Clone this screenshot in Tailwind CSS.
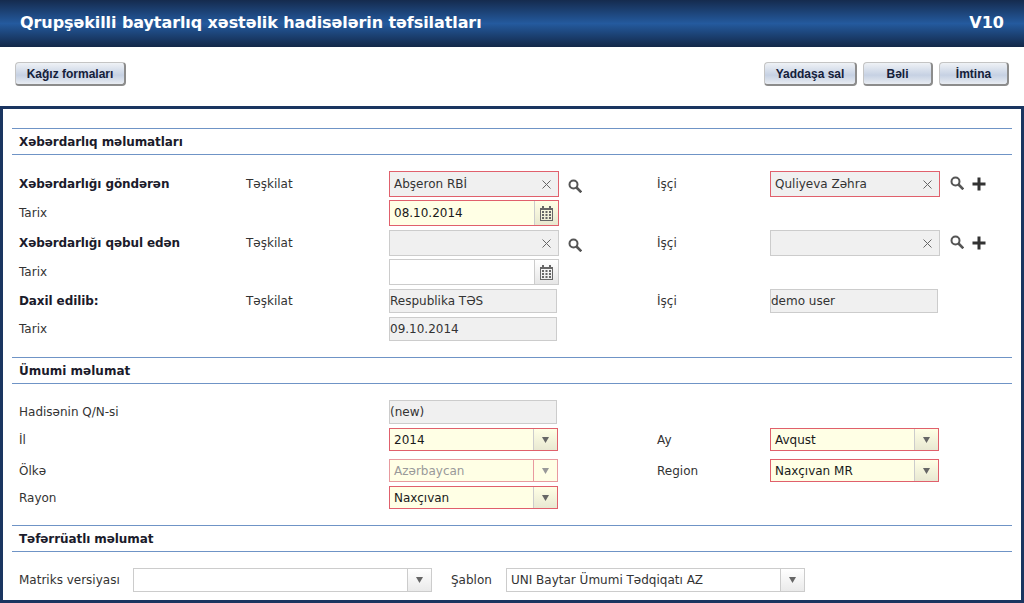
<!DOCTYPE html>
<html lang="en">
<head>
    <meta charset="UTF-8">
    <meta name="viewport" content="width=device-width, initial-scale=1.0">
    <title>Hadisə</title>
    <script src="https://cdn.jsdelivr.net/npm/@tailwindcss/browser@4"></script>
</head>
<body class="bg-white h-[603px] overflow-hidden font-['DejaVu_Sans',sans-serif] text-[12px] text-[#333]">
    <!-- header -->
    <div class="h-[47px] flex items-center justify-between pl-[20px] pr-[20px] pb-[1px] text-white font-bold text-[16px] bg-[linear-gradient(#152b4e,#245a9e_50%,#132848)]">
        <span class="tracking-[-0.08px]">Qrupşəkilli baytarlıq xəstəlik hadisələrin təfsilatları</span>
        <span>V10</span>
    </div>

    <!-- toolbar -->
    <div class="h-[59px] flex items-start justify-between pt-[15px] pl-[15px] pr-[15px]">
        <button class="w-[111px] h-[24px] rounded-[4px] border border-[#c4c4c4] border-r-2 border-b-2 border-r-[#8c8c8c] border-b-[#8c8c8c] bg-[linear-gradient(#eff2f6,#c6d1e3_58%,#e8ecf2)] font-['Liberation_Sans',sans-serif] font-bold text-[12px] text-[#14203a]">Kağız formaları</button>
        <div class="flex gap-[6px]">
            <button class="w-[93px] h-[24px] rounded-[4px] border border-[#c4c4c4] border-r-2 border-b-2 border-r-[#8c8c8c] border-b-[#8c8c8c] bg-[linear-gradient(#eff2f6,#c6d1e3_58%,#e8ecf2)] font-['Liberation_Sans',sans-serif] font-bold text-[12px] text-[#14203a]">Yaddaşa sal</button>
            <button class="w-[70px] h-[24px] rounded-[4px] border border-[#c4c4c4] border-r-2 border-b-2 border-r-[#8c8c8c] border-b-[#8c8c8c] bg-[linear-gradient(#eff2f6,#c6d1e3_58%,#e8ecf2)] font-['Liberation_Sans',sans-serif] font-bold text-[12px] text-[#14203a]">Bəli</button>
            <button class="w-[70px] h-[24px] rounded-[4px] border border-[#c4c4c4] border-r-2 border-b-2 border-r-[#8c8c8c] border-b-[#8c8c8c] bg-[linear-gradient(#eff2f6,#c6d1e3_58%,#e8ecf2)] font-['Liberation_Sans',sans-serif] font-bold text-[12px] text-[#14203a]">İmtina</button>
        </div>
    </div>

    <!-- main panel -->
    <div class="h-[497px] border-[3px] border-[#1a3560] pt-[19px] pl-[9px] pr-[9px]">

        <div class="h-[27px] border-y border-[#6f94c6] pl-[7px] flex items-center font-bold text-[12px] text-[#1b1b2b] tracking-[-0.08px]">Xəbərdarlıq məlumatları</div>

        <div class="pt-[16px] flex flex-col gap-[3px]">
            <div class="flex items-center h-[26px]">
                <div class="w-[234px] pl-[7px] font-bold text-[#1b1b2b] tracking-[-0.1px]">Xəbərdarlığı göndərən</div>
                <div class="w-[143px]">Təşkilat</div>
                <div class="w-[170px] h-[26px] border border-[#e0606c] bg-[#f0f0f0] flex items-center justify-between pl-[4px] pr-[7px]">
                    <span>Abşeron RBİ</span>
                    <svg width="9" height="9" viewBox="0 0 9 9" fill="none" stroke="#666" stroke-width="1"><path d="M0.5 0.5l8 8M8.500 0.5l-8 8"/></svg>
                </div>
                <div class="w-[98px] pl-[9px] pt-[3px]">
                    <svg width="14" height="14" viewBox="0 0 14 14" fill="none" stroke="#555"><circle cx="5.5" cy="5.5" r="4" stroke-width="2"/><path d="M8.500 8.500l4.800 4.800" stroke-width="2.6"/></svg>
                </div>
                <div class="w-[113px]">İşçi</div>
                <div class="w-[170px] h-[26px] border border-[#e0606c] bg-[#f0f0f0] flex items-center justify-between pl-[4px] pr-[7px]">
                    <span>Quliyeva Zəhra</span>
                    <svg width="9" height="9" viewBox="0 0 9 9" fill="none" stroke="#666" stroke-width="1"><path d="M0.5 0.5l8 8M8.500 0.5l-8 8"/></svg>
                </div>
                <div class="pl-[10px] pb-[2px] flex items-center gap-[8px]">
                    <svg width="14" height="14" viewBox="0 0 14 14" fill="none" stroke="#555"><circle cx="5.5" cy="5.5" r="4" stroke-width="2"/><path d="M8.500 8.500l4.800 4.800" stroke-width="2.6"/></svg>
                    <svg class="mt-[2px]" width="14" height="14" viewBox="0 0 14 14" fill="#333"><path d="M5.500 0.500h3v5h5v3h-5v5h-3v-5h-5v-3h5z"/></svg>
                </div>
            </div>
            <div class="flex items-center h-[26px]">
                <div class="w-[377px] pl-[7px]">Tarix</div>
                <div class="w-[170px] h-[26px] border border-[#e0606c] bg-[#ffffe5] flex items-center justify-between pl-[4px]">
                    <span class="text-[#1a1a1a]">08.10.2014</span>
                    <div class="w-[24px] h-full border-l border-[#ccc] bg-[linear-gradient(#ffffe5,#e8e8d0)] flex items-center justify-center">
                        <svg width="13" height="15" viewBox="0 0 13 15" fill="#666"><path d="M2 0h2v2h5v-2h2v2h2v13h-13v-13h2zM1 4v10h11v-10zM2 5h2v2h-2zM5.500 5h2v2h-2zM9 5h2v2h-2zM2 8h2v2h-2zM5.500 8h2v2h-2zM9 8h2v2h-2zM2 11h2v2h-2zM5.500 11h2v2h-2zM9 11h2v2h-2z"/></svg>
                    </div>
                </div>
            </div>
            <div class="flex items-center h-[26px] mt-[1px]">
                <div class="w-[234px] pl-[7px] font-bold text-[#1b1b2b] tracking-[-0.1px]">Xəbərdarlığı qəbul edən</div>
                <div class="w-[143px]">Təşkilat</div>
                <div class="w-[170px] h-[26px] border border-[#ccc] bg-[#f0f0f0] flex items-center justify-end pr-[7px]">
                    <svg width="9" height="9" viewBox="0 0 9 9" fill="none" stroke="#666" stroke-width="1"><path d="M0.5 0.5l8 8M8.500 0.5l-8 8"/></svg>
                </div>
                <div class="w-[98px] pl-[9px] pt-[3px]">
                    <svg width="14" height="14" viewBox="0 0 14 14" fill="none" stroke="#555"><circle cx="5.5" cy="5.5" r="4" stroke-width="2"/><path d="M8.500 8.500l4.800 4.800" stroke-width="2.6"/></svg>
                </div>
                <div class="w-[113px]">İşçi</div>
                <div class="w-[170px] h-[26px] border border-[#ccc] bg-[#f0f0f0] flex items-center justify-end pr-[7px]">
                    <svg width="9" height="9" viewBox="0 0 9 9" fill="none" stroke="#666" stroke-width="1"><path d="M0.5 0.5l8 8M8.500 0.5l-8 8"/></svg>
                </div>
                <div class="pl-[10px] pb-[2px] flex items-center gap-[8px]">
                    <svg width="14" height="14" viewBox="0 0 14 14" fill="none" stroke="#555"><circle cx="5.5" cy="5.5" r="4" stroke-width="2"/><path d="M8.500 8.500l4.800 4.800" stroke-width="2.6"/></svg>
                    <svg class="mt-[2px]" width="14" height="14" viewBox="0 0 14 14" fill="#333"><path d="M5.500 0.500h3v5h5v3h-5v5h-3v-5h-5v-3h5z"/></svg>
                </div>
            </div>
            <div class="flex items-center h-[26px]">
                <div class="w-[377px] pl-[7px]">Tarix</div>
                <div class="w-[170px] h-[26px] border border-[#ccc] bg-white flex justify-end">
                    <div class="w-[24px] h-full border-l border-[#ccc] bg-[linear-gradient(#fff,#e6e6e6)] flex items-center justify-center">
                        <svg width="13" height="15" viewBox="0 0 13 15" fill="#666"><path d="M2 0h2v2h5v-2h2v2h2v13h-13v-13h2zM1 4v10h11v-10zM2 5h2v2h-2zM5.500 5h2v2h-2zM9 5h2v2h-2zM2 8h2v2h-2zM5.500 8h2v2h-2zM9 8h2v2h-2zM2 11h2v2h-2zM5.500 11h2v2h-2zM9 11h2v2h-2z"/></svg>
                    </div>
                </div>
            </div>
            <div class="flex items-center h-[24px] mt-[1px]">
                <div class="w-[234px] pl-[7px] font-bold text-[#1b1b2b] tracking-[-0.1px]">Daxil edilib:</div>
                <div class="w-[143px]">Təşkilat</div>
                <div class="w-[168px] h-[24px] border border-[#ccc] bg-[#f0f0f0] flex items-center">Respublika TƏS</div>
                <div class="w-[100px]"></div>
                <div class="w-[113px]">İşçi</div>
                <div class="w-[168px] h-[24px] border border-[#ccc] bg-[#f0f0f0] flex items-center">demo user</div>
            </div>
            <div class="flex items-center h-[24px] mt-[1px]">
                <div class="w-[377px] pl-[7px]">Tarix</div>
                <div class="w-[168px] h-[24px] border border-[#ccc] bg-[#f0f0f0] flex items-center">09.10.2014</div>
            </div>
        </div>

        <div class="mt-[16px] h-[27px] border-y border-[#6f94c6] pl-[7px] flex items-center font-bold text-[12px] text-[#1b1b2b]">Ümumi məlumat</div>

        <div class="pt-[16px]">
            <div class="flex items-center h-[24px]">
                <div class="w-[377px] pl-[7px]">Hadisənin Q/N-si</div>
                <div class="w-[168px] h-[24px] border border-[#ccc] bg-[#f0f0f0] flex items-center">(new)</div>
            </div>
            <div class="flex items-center h-[23px] mt-[4px]">
                <div class="w-[377px] pl-[7px]">İl</div>
                <div class="w-[169px] h-[23px] border border-[#e0606c] bg-[#ffffe5] flex items-center justify-between pl-[4px]">
                    <span class="text-[#1a1a1a]">2014</span>
                    <div class="w-[24px] h-full border-l border-[#ccc] bg-[linear-gradient(#ffffe5,#e8e8d2)] flex items-center justify-center">
                        <svg width="7" height="6" viewBox="0 0 7 6" fill="#666"><path d="M0 0h7l-3.500 6z"/></svg>
                    </div>
                </div>
                <div class="w-[99px]"></div>
                <div class="w-[113px]">Ay</div>
                <div class="w-[169px] h-[23px] border border-[#e0606c] bg-[#ffffe5] flex items-center justify-between pl-[4px]">
                    <span class="text-[#1a1a1a]">Avqust</span>
                    <div class="w-[24px] h-full border-l border-[#ccc] bg-[linear-gradient(#ffffe5,#e8e8d2)] flex items-center justify-center">
                        <svg width="7" height="6" viewBox="0 0 7 6" fill="#666"><path d="M0 0h7l-3.500 6z"/></svg>
                    </div>
                </div>
            </div>
            <div class="flex items-center h-[23px] mt-[8px]">
                <div class="w-[377px] pl-[7px]">Ölkə</div>
                <div class="w-[169px] h-[23px] border border-[#e89a9f] bg-[#ffffe5] flex items-center justify-between pl-[4px]">
                    <span class="text-[#999]">Azərbaycan</span>
                    <div class="w-[24px] h-full border-l border-[#e89a9f] flex items-center justify-center">
                        <svg width="7" height="6" viewBox="0 0 7 6" fill="#999"><path d="M0 0h7l-3.500 6z"/></svg>
                    </div>
                </div>
                <div class="w-[99px]"></div>
                <div class="w-[113px]">Region</div>
                <div class="w-[169px] h-[23px] border border-[#e0606c] bg-[#ffffe5] flex items-center justify-between pl-[4px]">
                    <span class="text-[#1a1a1a]">Naxçıvan MR</span>
                    <div class="w-[24px] h-full border-l border-[#ccc] bg-[linear-gradient(#ffffe5,#e8e8d2)] flex items-center justify-center">
                        <svg width="7" height="6" viewBox="0 0 7 6" fill="#666"><path d="M0 0h7l-3.500 6z"/></svg>
                    </div>
                </div>
            </div>
            <div class="flex items-center h-[23px] mt-[4px]">
                <div class="w-[377px] pl-[7px]">Rayon</div>
                <div class="w-[169px] h-[23px] border border-[#e0606c] bg-[#ffffe5] flex items-center justify-between pl-[4px]">
                    <span class="text-[#1a1a1a]">Naxçıvan</span>
                    <div class="w-[24px] h-full border-l border-[#ccc] bg-[linear-gradient(#ffffe5,#e8e8d2)] flex items-center justify-center">
                        <svg width="7" height="6" viewBox="0 0 7 6" fill="#666"><path d="M0 0h7l-3.500 6z"/></svg>
                    </div>
                </div>
            </div>
        </div>

        <div class="mt-[16px] h-[27px] border-y border-[#6f94c6] pl-[7px] flex items-center font-bold text-[12px] text-[#1b1b2b] tracking-[-0.08px]">Təfərrüatlı məlumat</div>

        <div class="pt-[16px] flex items-center h-[40px]">
            <div class="w-[121px] pl-[7px]">Matriks versiyası</div>
            <div class="w-[299px] h-[24px] border border-[#ccc] flex justify-end">
                <div class="w-[24px] h-full border-l border-[#ccc] bg-[linear-gradient(#fff,#eaeaea)] flex items-center justify-center">
                    <svg width="7" height="6" viewBox="0 0 7 6" fill="#666"><path d="M0 0h7l-3.500 6z"/></svg>
                </div>
            </div>
            <div class="w-[74px] pl-[19px]">Şablon</div>
            <div class="w-[299px] h-[24px] border border-[#ccc] flex items-center justify-between pl-[4px]">
                <span>UNI Baytar Ümumi Tədqiqatı AZ</span>
                <div class="w-[24px] h-full border-l border-[#ccc] bg-[linear-gradient(#fff,#eaeaea)] flex items-center justify-center">
                    <svg width="7" height="6" viewBox="0 0 7 6" fill="#666"><path d="M0 0h7l-3.500 6z"/></svg>
                </div>
            </div>
        </div>
    </div>
</body>
</html>
